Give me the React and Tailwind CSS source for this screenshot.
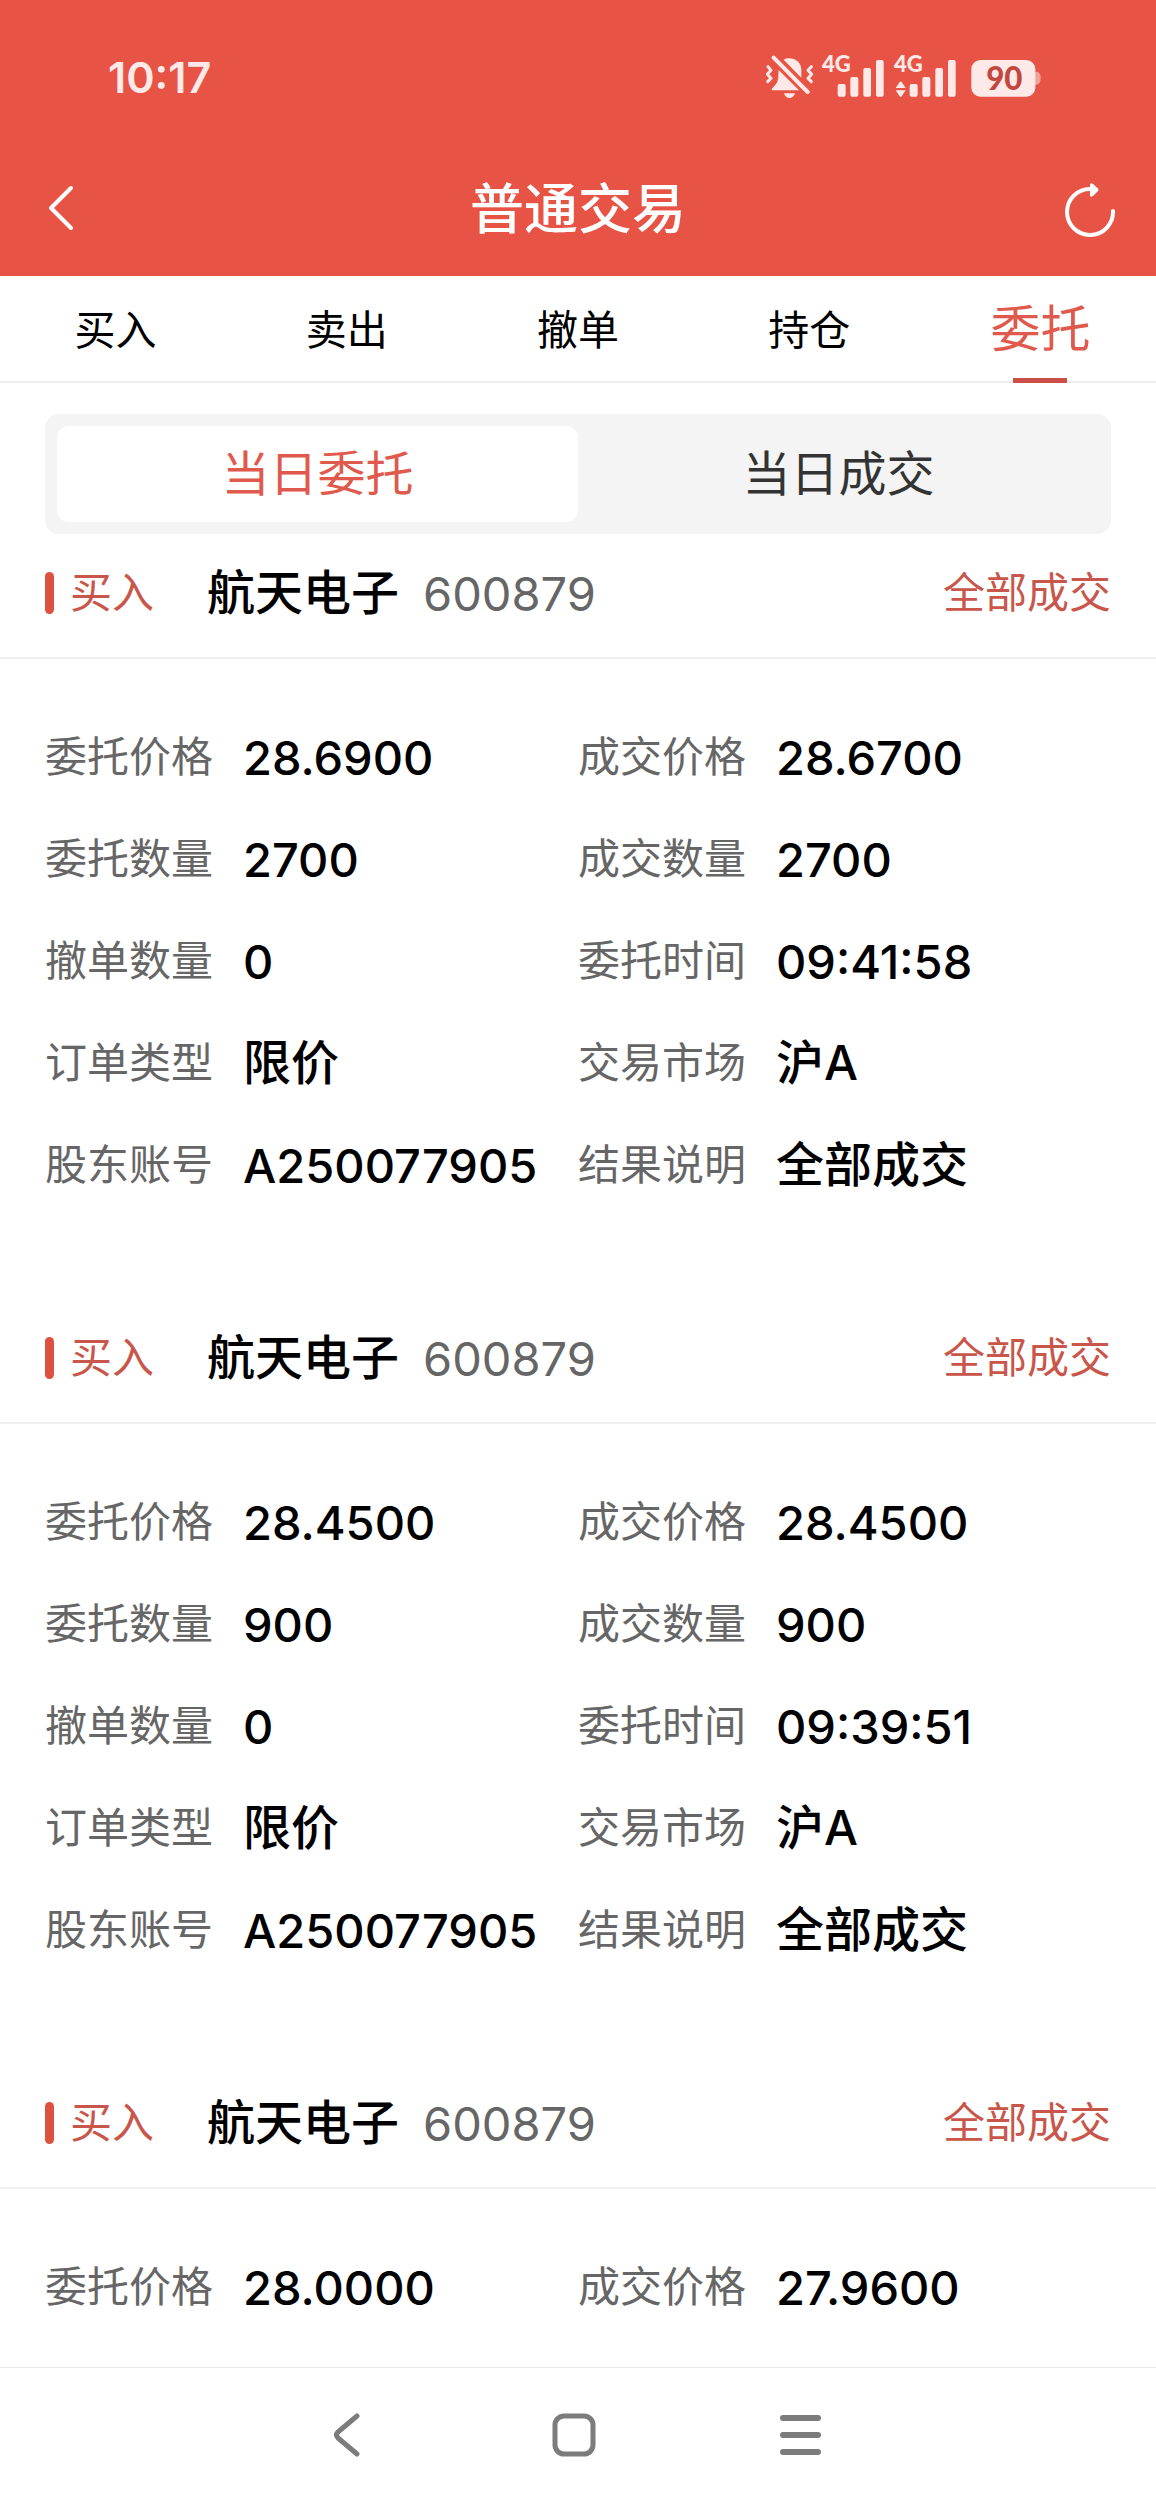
import React from "react";

const tabs = ["买入", "卖出", "撤单", "持仓", "委托"];

const orders = [
  {
    id: 1,
    fields: [
      ["委托价格", "28.6900"],
      ["成交价格", "28.6700"],
      ["委托数量", "2700"],
      ["成交数量", "2700"],
      ["撤单数量", "0"],
      ["委托时间", "09:41:58"],
      ["订单类型", "限价"],
      ["交易市场", "沪A"],
      ["股东账号", "A250077905"],
      ["结果说明", "全部成交"],
    ],
  },
  {
    id: 2,
    fields: [
      ["委托价格", "28.4500"],
      ["成交价格", "28.4500"],
      ["委托数量", "900"],
      ["成交数量", "900"],
      ["撤单数量", "0"],
      ["委托时间", "09:39:51"],
      ["订单类型", "限价"],
      ["交易市场", "沪A"],
      ["股东账号", "A250077905"],
      ["结果说明", "全部成交"],
    ],
  },
  {
    id: 3,
    fields: [
      ["委托价格", "28.0000"],
      ["成交价格", "27.9600"],
    ],
  },
];

// Figures are set a touch smaller than Chinese values.
const isFigure = (value) => /^[A-Z0-9.:]+$/.test(value);

function MutedBell() {
  return (
    <svg viewBox="78 72 147 132" className="h-11 w-[49px]" fill="#fdeae8" aria-hidden="true">
      <path d="M134 86C153 75 187 84 187 118L187 140Z" />
      <path d="M119 117L180 178H102C97 178 97 173 101 170C113 160 118 150 118 136Z" />
      <path d="M135 187H168C165 197 158 201 151 201C144 201 138 197 135 187Z" />
      <path d="M104 80L206 183" stroke="#fdeae8" strokeWidth="12" strokeLinecap="round" />
      <g fill="none" stroke="#fdeae8" strokeWidth="9" strokeLinecap="round" strokeLinejoin="round">
        <path d="M87 107L96 118L85 130L96 142L86 152" />
        <path d="M217 107L207 118L218 130L207 142L217 152" />
      </g>
    </svg>
  );
}

function Signal({ data }) {
  return (
    <svg viewBox="248 54 186 168" className="h-14 w-[62px] overflow-visible" fill="#fdeae8" aria-hidden="true">
      <text x="248" y="124" fontSize="66" fontWeight="900" fontFamily="Lato, sans-serif">4G</text>
      {data && <path d="M253 171L265 153Q268 150 271 153L283 171ZM253 178L265 196Q268 199 271 196L283 178Z" />}
      <rect x="295" y="159" width="24" height="38" rx="6" />
      <rect x="333" y="138" width="24" height="59" rx="6" />
      <rect x="372" y="111" width="23" height="86" rx="6" />
      <rect x="410" y="87" width="23" height="110" rx="6" />
    </svg>
  );
}

function Battery() {
  return (
    <svg viewBox="694 72 210 132" className="h-11 w-[70px]" aria-hidden="true">
      <path d="M886 122H892Q903 124 903 141Q903 158 892 161H886Z" fill="#f0a29a" />
      <rect x="695" y="87" width="192" height="110" rx="27" fill="#fdeae8" />
      <text x="794" y="176" textAnchor="middle" fontSize="94" fontWeight="900" fontFamily="Lato, sans-serif" fill="#c4473f">90</text>
    </svg>
  );
}

function Order({ fields }) {
  return (
    <section className="pb-[83px]">
      <header className="flex h-[125px] items-center border-b-2 border-[#efefef] px-[45px] pb-[5px]">
        <span className="h-[42px] w-[9px] rounded-full bg-[#dc5140]" />
        <span className="ml-4 text-[42px] text-[#c9564a]">买入</span>
        <h2 className="ml-[53px] text-[48px] font-medium text-black">航天电子</h2>
        <span className="ml-6 text-[47px] text-[#666666]">600879</span>
        <span className="ml-auto text-[42px] text-[#c9564a]">全部成交</span>
      </header>
      <dl className="grid grid-cols-2 px-[45px] pt-[47px]">
        {fields.map(([label, value]) => (
          <div key={label} className="flex h-[102px] items-center gap-[30px] whitespace-nowrap">
            <dt className="text-[42px] text-[#666666]">{label}</dt>
            <dd className={isFigure(value) ? "text-[47px] font-medium text-black" : "text-[48px] font-medium text-black"}>
              {value}
            </dd>
          </div>
        ))}
      </dl>
    </section>
  );
}

export default function App() {
  return (
    <div className="flex h-screen flex-col overflow-hidden bg-white font-['Inter','Noto_Sans_CJK_SC',sans-serif] leading-none">
      <div className="shrink-0 bg-[#e75446] text-white">
        <div className="flex h-[154px] items-center justify-between pr-[115px] pl-[108px]">
          <time className="text-[43px] font-semibold text-[#fdeae8]">10:17</time>
          <div className="flex items-center">
            <MutedBell />
            <div className="ml-2 flex gap-[10px]">
              <Signal />
              <Signal data />
            </div>
            <div className="ml-[15px]">
              <Battery />
            </div>
          </div>
        </div>
        <div className="flex h-[122px] items-start justify-between px-[39px]">
          <button type="button" aria-label="返回" className="flex h-[108px] w-[52px] items-center justify-start pl-2">
            <svg viewBox="0 0 27 48" className="h-12 w-[27px]" fill="none" stroke="#fff" strokeWidth="4" strokeLinecap="round" strokeLinejoin="round">
              <path d="M24 4L4 24L24 44" />
            </svg>
          </button>
          <h1 className="flex h-[112px] items-center text-[54px] font-medium">普通交易</h1>
          <button type="button" aria-label="刷新" className="flex h-[108px] w-[52px] items-center justify-end">
            <svg viewBox="0 0 52 60" className="h-[60px] w-[52px]" fill="none">
              <path d="M26 11A23 23 0 1 0 48 33" stroke="#fff" strokeWidth="4" strokeLinecap="round" />
              <path d="M25 7Q25 4 28 6L33 10.5Q34 12 33 13L28 18Q25 20 25 17Z" fill="#fff" />
            </svg>
          </button>
        </div>
      </div>

      <nav className="grid h-[107px] shrink-0 grid-cols-5 border-b-2 border-[#ececec]">
        {tabs.map((tab) =>
          tab === "委托" ? (
            <button key={tab} type="button" aria-current="page" className="relative text-[50px] text-[#df5a4d]">
              {tab}
              <span className="absolute -bottom-[2px] left-1/2 h-[5px] w-[54px] -translate-x-1/2 bg-[#c94f47]" />
            </button>
          ) : (
            <button key={tab} type="button" className="pt-[3px] text-[41px] text-black">
              {tab}
            </button>
          )
        )}
      </nav>

      <main className="min-h-0 flex-1 overflow-hidden pt-[31px]">
        <div className="mx-[45px] grid h-[120px] grid-cols-2 rounded-[14px] bg-[#f4f4f4] p-3 text-[48px]">
          <button type="button" aria-pressed="true" className="rounded-xl bg-white text-[#df5a4d]">
            当日委托
          </button>
          <button type="button" aria-pressed="false" className="text-[#333333]">
            当日成交
          </button>
        </div>
        {orders.map((order) => (
          <Order key={order.id} fields={order.fields} />
        ))}
      </main>

      <footer className="flex h-[143px] shrink-0 items-center justify-center border-t border-[#ececec] bg-white pr-2 pb-[9px] text-[#7c7c7c]">
        <button type="button" aria-label="返回上一页" className="flex w-[227px] justify-center">
          <svg viewBox="0 0 44 44" className="size-11" fill="none" stroke="currentColor" strokeWidth="5" strokeLinecap="round" strokeLinejoin="round">
            <path d="M32 3L13 19Q10 22 13 25L32 41" />
          </svg>
        </button>
        <button type="button" aria-label="主屏幕" className="flex w-[227px] justify-center">
          <svg viewBox="0 0 44 44" className="size-11" fill="none" stroke="currentColor" strokeWidth="5">
            <rect x="3" y="3" width="38" height="38" rx="9" />
          </svg>
        </button>
        <button type="button" aria-label="最近任务" className="flex w-[227px] justify-center">
          <svg viewBox="0 0 44 44" className="size-11" fill="none" stroke="currentColor" strokeWidth="6" strokeLinecap="round">
            <path d="M4 5H39M4 22H39M4 39H39" />
          </svg>
        </button>
      </footer>
    </div>
  );
}
